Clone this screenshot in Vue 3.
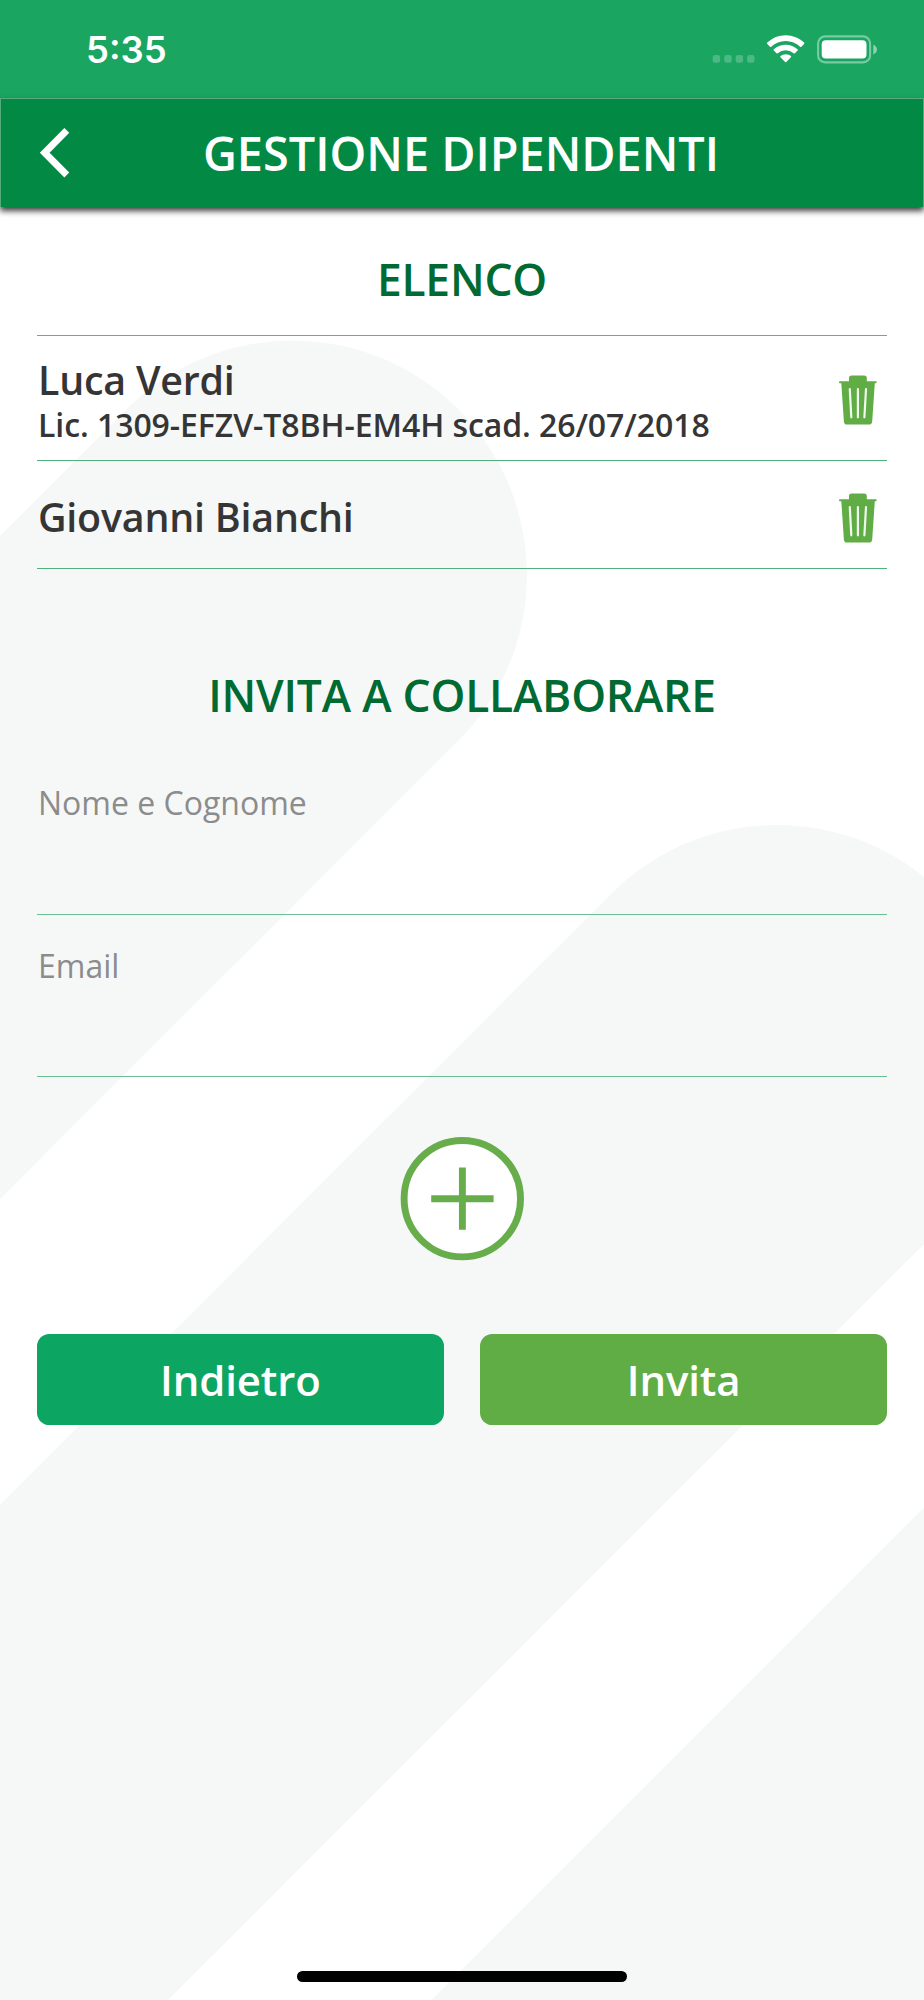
<script setup>
import { ref } from 'vue'

const employees = ref([
  { name: 'Luca Verdi', licence: 'Lic. 1309-EFZV-T8BH-EM4H scad. 26/07/2018' },
  { name: 'Giovanni Bianchi', licence: '' },
])
const fields = ['Nome e Cognome', 'Email']
</script>

<template>
  <div class="screen">
    <svg class="backdrop" viewBox="0 0 924 2000" aria-hidden="true">
      <g fill="none" stroke="#f6f8f8" stroke-width="469" stroke-linecap="round">
        <path d="M292.5 575L-707.5 1575" />
        <path d="M777 1059.5L-223 2059.5" />
      </g>
      <path d="M924 1507.5V2000H431.500Z" fill="#f6f8f8" />
    </svg>

    <div class="status">
      <span class="time">5:35</span>
      <svg class="indicators" width="166" height="30" viewBox="712 34 166 30">
        <g fill="#fff" fill-opacity=".22">
          <rect x="712.700" y="55" width="7.400" height="7.700" rx="2.200" />
          <rect x="724.300" y="55" width="7.400" height="7.700" rx="2.200" />
          <rect x="735.700" y="55" width="7.400" height="7.700" rx="2.200" />
          <rect x="747.100" y="55" width="7.400" height="7.700" rx="2.200" />
        </g>
        <g fill="#fff">
          <path d="M785.700 35.200c7.100 0 13.600 2.800 18.400 7.400.4.400.4.900 0 1.300l-2.700 2.800c-.4.400-.9.400-1.300 0a20.800 20.800 0 0 0-28.800 0c-.4.400-.9.400-1.300 0l-2.700-2.800c-.4-.4-.4-.9 0-1.300a26.500 26.500 0 0 1 18.400-7.400z" />
          <path d="M785.700 44.700c4.600 0 8.700 1.700 11.900 4.600.4.400.4.900 0 1.300l-2.700 2.700c-.4.400-.9.400-1.300 0a11.700 11.700 0 0 0-15.800 0c-.4.400-.9.400-1.300 0l-2.700-2.700c-.4-.4-.4-.9 0-1.300a17.500 17.500 0 0 1 11.900-4.600z" />
          <path d="M785.700 54.200c2 0 3.800.7 5.200 1.800.4.300.4.900 0 1.300l-4.600 4.700c-.4.400-.8.400-1.200 0l-4.600-4.700c-.4-.4-.4-1 0-1.300a8.400 8.400 0 0 1 5.200-1.800z" />
          <rect x="821.700" y="40.200" width="44.800" height="18.400" rx="4" />
        </g>
        <rect x="818.100" y="36.400" width="52" height="26" rx="7" fill="none" stroke="#fff" stroke-opacity=".42" stroke-width="2.100" />
        <path d="M873.300 44.700c2.200.9 3.700 2.700 3.700 4.900s-1.500 4-3.700 4.900z" fill="#fff" fill-opacity=".5" />
      </svg>
    </div>

    <header class="navbar">
      <svg class="back" width="32" height="54" viewBox="38 126 32 54">
        <path d="M66.800 130.400L44.700 152.700L66.800 175" fill="none" stroke="#fff" stroke-width="6.900" />
      </svg>
      <h1>GESTIONE DIPENDENTI</h1>
    </header>

    <main class="content">
      <h2>ELENCO</h2>
      <ul class="list">
        <li v-for="e in employees" :key="e.name" :class="{ single: !e.licence }">
          <div class="who">
            <div class="name">{{ e.name }}</div>
            <div v-if="e.licence" class="licence">{{ e.licence }}</div>
          </div>
          <svg class="trash" width="38" height="50" viewBox="0 0 38 50">
            <path d="M10 6.200V3Q10 .4 12.600 .4H25.200Q27.800 .4 27.800 3V6.200H37Q37.700 6.200 37.700 7.100T37 8.300H35.800L33.200 46.500Q32.900 49.600 30.100 49.600H7.900Q5.100 49.600 4.900 46.500L2.300 8.300H.8Q0 8.200 0 7.200T.8 6.200Z" fill="#60ad45" />
            <path d="M10.800 14.200L12.300 42.300M18.900 14.200V42.300M27 14.200L25.400 42.300" fill="none" stroke="#f1f8ee" stroke-width="2.200" stroke-linecap="round" />
          </svg>
        </li>
      </ul>

      <h2 class="invite">INVITA A COLLABORARE</h2>
      <label v-for="f in fields" :key="f" class="field">{{ f }}</label>

      <svg class="add" width="124" height="124" viewBox="0 0 124 124">
        <circle cx="62.300" cy="61.700" r="58.200" fill="#fff" stroke="#68ad4b" stroke-width="6.900" />
        <path d="M31.200 61.700H93.600M62.400 30.500V92.800" fill="none" stroke="#68ad4b" stroke-width="6.900" />
      </svg>

      <div class="actions">
        <button class="secondary">Indietro</button>
        <button class="primary">Invita</button>
      </div>
    </main>
    <div class="home"></div>
  </div>
</template>

<style>
body {
  margin: 0;
  background: #fff;
}
</style>

<style scoped>
.screen {
  position: relative;
  z-index: 0;
  width: 924px;
  height: 2000px;
  overflow: hidden;
  display: flex;
  flex-direction: column;
  background: #fff;
  color: #353535;
  font-family: "Open Sans", "Noto Sans", sans-serif;
}
.backdrop {
  position: absolute;
  inset: 0;
  z-index: -1;
}
.status {
  box-sizing: border-box;
  height: 98px;
  padding: 0 46px 0 86px;
  background: #1aa561;
  display: flex;
  justify-content: space-between;
  align-items: flex-start;
}
.time {
  padding-top: 28px;
  color: #fff;
  font: 600 36.500px/44px Inter, sans-serif;
}
.indicators {
  margin-top: 34px;
}
.navbar {
  box-sizing: border-box;
  height: 109px;
  display: grid;
  grid-template-columns: 99px 1fr 101px;
  border: 1px solid #55ab7b;
  border-bottom: 0;
  background: #028a45;
  box-shadow: 0 4px 6px rgba(0, 0, 0, .75);
}
.back {
  margin: 27px 0 0 37px;
}
h1 {
  margin: 0;
  text-align: center;
  white-space: nowrap;
  color: #fff;
  font-size: 46.800px;
  font-weight: 600;
  line-height: 108px;
}
.content {
  padding: 16px 37px 0;
  display: flex;
  flex-direction: column;
}
h2 {
  height: 112px;
  margin: 0;
  text-align: center;
  color: #006a33;
  font-size: 44.350px;
  font-weight: 600;
  line-height: 113px;
  letter-spacing: -.2px;
}
.list {
  margin: 0;
  padding: 0;
  list-style: none;
  border-top: 1px solid #5db389;
}
.list li {
  box-sizing: border-box;
  height: 125px;
  padding: 21px 10px 0 1px;
  border-bottom: 1px solid #52b07e;
  display: flex;
  justify-content: space-between;
  align-items: flex-start;
}
.list li.single {
  height: 108px;
  padding-top: 33px;
}
.name {
  font-size: 39.400px;
  font-weight: 600;
  line-height: 46px;
  letter-spacing: -.22px;
}
.licence {
  font-size: 32px;
  font-weight: 600;
  line-height: 44px;
  letter-spacing: -.07px;
}
.trash {
  margin-top: 18px;
}
.single .trash {
  margin-top: -1px;
}
.invite {
  margin-top: 70px;
}
.field {
  box-sizing: border-box;
  height: 162px;
  padding: 29px 0 0 1px;
  border-bottom: 1px solid #6cbf95;
  color: #8c8c8c;
  font-size: 32px;
  line-height: 44px;
}
.invite + .field {
  height: 164px;
  padding-top: 30px;
}
.add {
  margin: 60px 0 0 363px;
}
.actions {
  margin-top: 73px;
  display: grid;
  grid-template-columns: 1fr 1fr;
  gap: 36.600px;
}
button {
  height: 91.400px;
  border: 0;
  padding: 0;
  border-radius: 12.300px;
  color: #fff;
  font: 600 41.900px/91px "Open Sans", "Noto Sans", sans-serif;
  letter-spacing: -.12px;
}
.secondary {
  background: #0ca561;
}
.primary {
  background: #60ad45;
}
.home {
  position: absolute;
  left: 297px;
  top: 1970.500px;
  width: 330px;
  height: 11.500px;
  border-radius: 6px;
  background: #000;
}
</style>
